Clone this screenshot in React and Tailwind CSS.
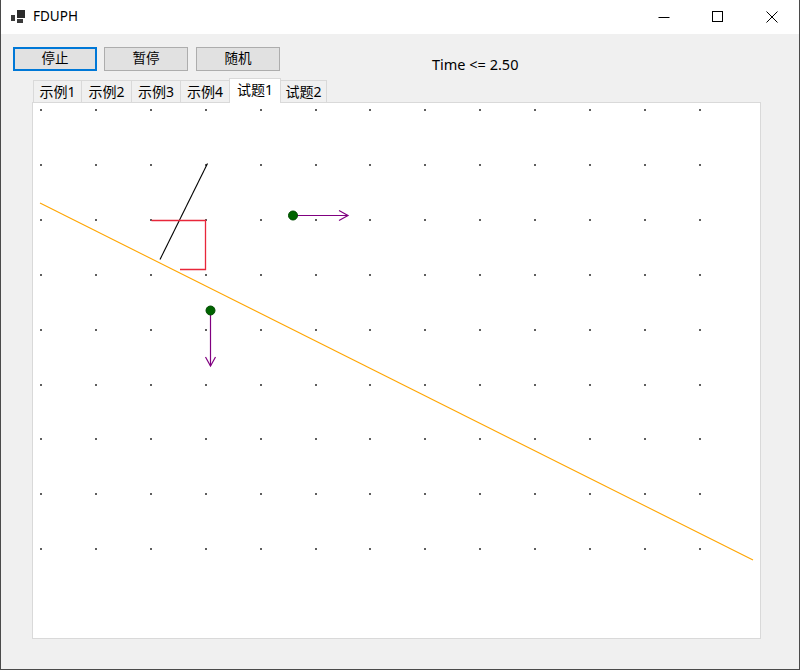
import React from "react";

const dotsX = Array.from({ length: 13 }, (_, i) => 8 + 54.9 * i);
const dotsY = Array.from({ length: 9 }, (_, j) => 7 + 54.9 * j);

function Canvas() {
  return (
    <svg width="727" height="535" className="block">
      {dotsY.map((y) =>
        dotsX.map((x) => (
          <rect key={`${x}-${y}`} x={Math.round(x) - 1} y={Math.round(y) - 1} width="2" height="2" fill="#5f5f5f" />
        ))
      )}
      <line x1="7" y1="100" x2="720" y2="457" stroke="#ffa500" strokeWidth="1.1" />
      <line x1="174.5" y1="60.5" x2="127" y2="156.5" stroke="#000" strokeWidth="1.1" />
      <polyline points="118.5,117.5 172.5,117.5 172.5,166.5 147,166.5" fill="none" stroke="#e8263a" strokeWidth="1.3" />
      <line x1="260" y1="112.5" x2="315" y2="112.5" stroke="#800080" strokeWidth="1.2" />
      <polyline points="306,107.5 315,112.5 306,117.5" fill="none" stroke="#800080" strokeWidth="1.2" />
      <circle cx="260" cy="112.5" r="4.5" fill="#006400" stroke="#004a00" strokeWidth="1" />
      <line x1="177.5" y1="207.5" x2="177.5" y2="263" stroke="#800080" strokeWidth="1.2" />
      <polyline points="172.5,254 177.5,263 182.5,254" fill="none" stroke="#800080" strokeWidth="1.2" />
      <circle cx="177.5" cy="207.5" r="4.5" fill="#006400" stroke="#004a00" strokeWidth="1" />
    </svg>
  );
}

export default function App() {
  const font = { fontFamily: '"Noto Sans", "Noto Sans CJK SC", sans-serif' };
  const tabs = [
    { t: "示例1", w: 48 },
    { t: "示例2", w: 50 },
    { t: "示例3", w: 49 },
    { t: "示例4", w: 49 },
  ];
  return (
    <div
      className="w-[800px] h-[670px] bg-[#f0f0f0] border-l border-r border-b border-[#4a4a4a] flex flex-col text-[#000] overflow-hidden"
      style={font}
    >
      {/* title bar */}
      <div className="h-[34px] bg-white flex items-center shrink-0">
        <svg width="14" height="14" viewBox="0 0 14 14" className="ml-[10px]">
          <rect x="6" y="0" width="8" height="8" fill="#2b2b2b" />
          <rect x="0" y="5" width="4" height="6" fill="#3a3a3a" />
          <rect x="6" y="9" width="6" height="4" fill="#3a3a3a" />
        </svg>
        <span className="ml-[8px] text-[13.5px] leading-none">FDUPH</span>
        <div className="flex-1" />
        <div className="w-[54px] h-full flex items-center justify-center">
          <svg width="12" height="12" viewBox="0 0 12 12">
            <line x1="0.5" y1="6.5" x2="11.5" y2="6.5" stroke="#000" strokeWidth="1" />
          </svg>
        </div>
        <div className="w-[54px] h-full flex items-center justify-center">
          <svg width="12" height="12" viewBox="0 0 12 12">
            <rect x="0.5" y="0.5" width="10" height="10" fill="none" stroke="#000" strokeWidth="1" />
          </svg>
        </div>
        <div className="w-[54px] h-full flex items-center justify-center">
          <svg width="12" height="12" viewBox="0 0 12 12">
            <path d="M0.5 0.5 L11.5 11.5 M11.5 0.5 L0.5 11.5" stroke="#000" strokeWidth="1" />
          </svg>
        </div>
      </div>

      {/* buttons row */}
      <div className="flex items-start mt-[13px] ml-[12px] h-[24px]">
        <button className="w-[84px] h-[24px] bg-[#e1e1e1] border-2 border-[#0078d7] text-[13.5px] leading-none flex items-center justify-center">
          停止
        </button>
        <button className="ml-[7px] w-[84px] h-[24px] bg-[#e1e1e1] border border-[#adadad] text-[13.5px] leading-none flex items-center justify-center">
          暂停
        </button>
        <button className="ml-[8px] w-[84px] h-[24px] bg-[#e1e1e1] border border-[#adadad] text-[13.5px] leading-none flex items-center justify-center">
          随机
        </button>
        <span className="ml-[152px] mt-[8px] text-[14.5px] leading-[19px] whitespace-nowrap">Time &lt;= 2.50</span>
      </div>

      {/* tab strip */}
      <div className="flex items-end h-[24px] mt-[7px] pl-[32px] relative z-10">
        {tabs.map((tb) => (
          <div
            key={tb.t}
            className="h-[22px] bg-[#f0f0f0] border-t border-l border-[#d9d9d9] flex items-center justify-center text-[14px] leading-none"
            style={{ width: tb.w }}
          >
            {tb.t}
          </div>
        ))}
        <div className="w-[52px] h-[25px] mb-[-1px] bg-white border-t border-l border-r border-[#d9d9d9] flex items-start justify-center pt-[4px] text-[14px] leading-none">
          试题1
        </div>
        <div className="w-[46px] h-[22px] bg-[#f0f0f0] border-t border-r border-[#d9d9d9] flex items-center justify-center text-[14px] leading-none">
          试题2
        </div>
      </div>

      {/* panel */}
      <div className="ml-[31px] w-[729px] h-[537px] bg-white border border-[#d9d9d9]">
        <Canvas />
      </div>
    </div>
  );
}
